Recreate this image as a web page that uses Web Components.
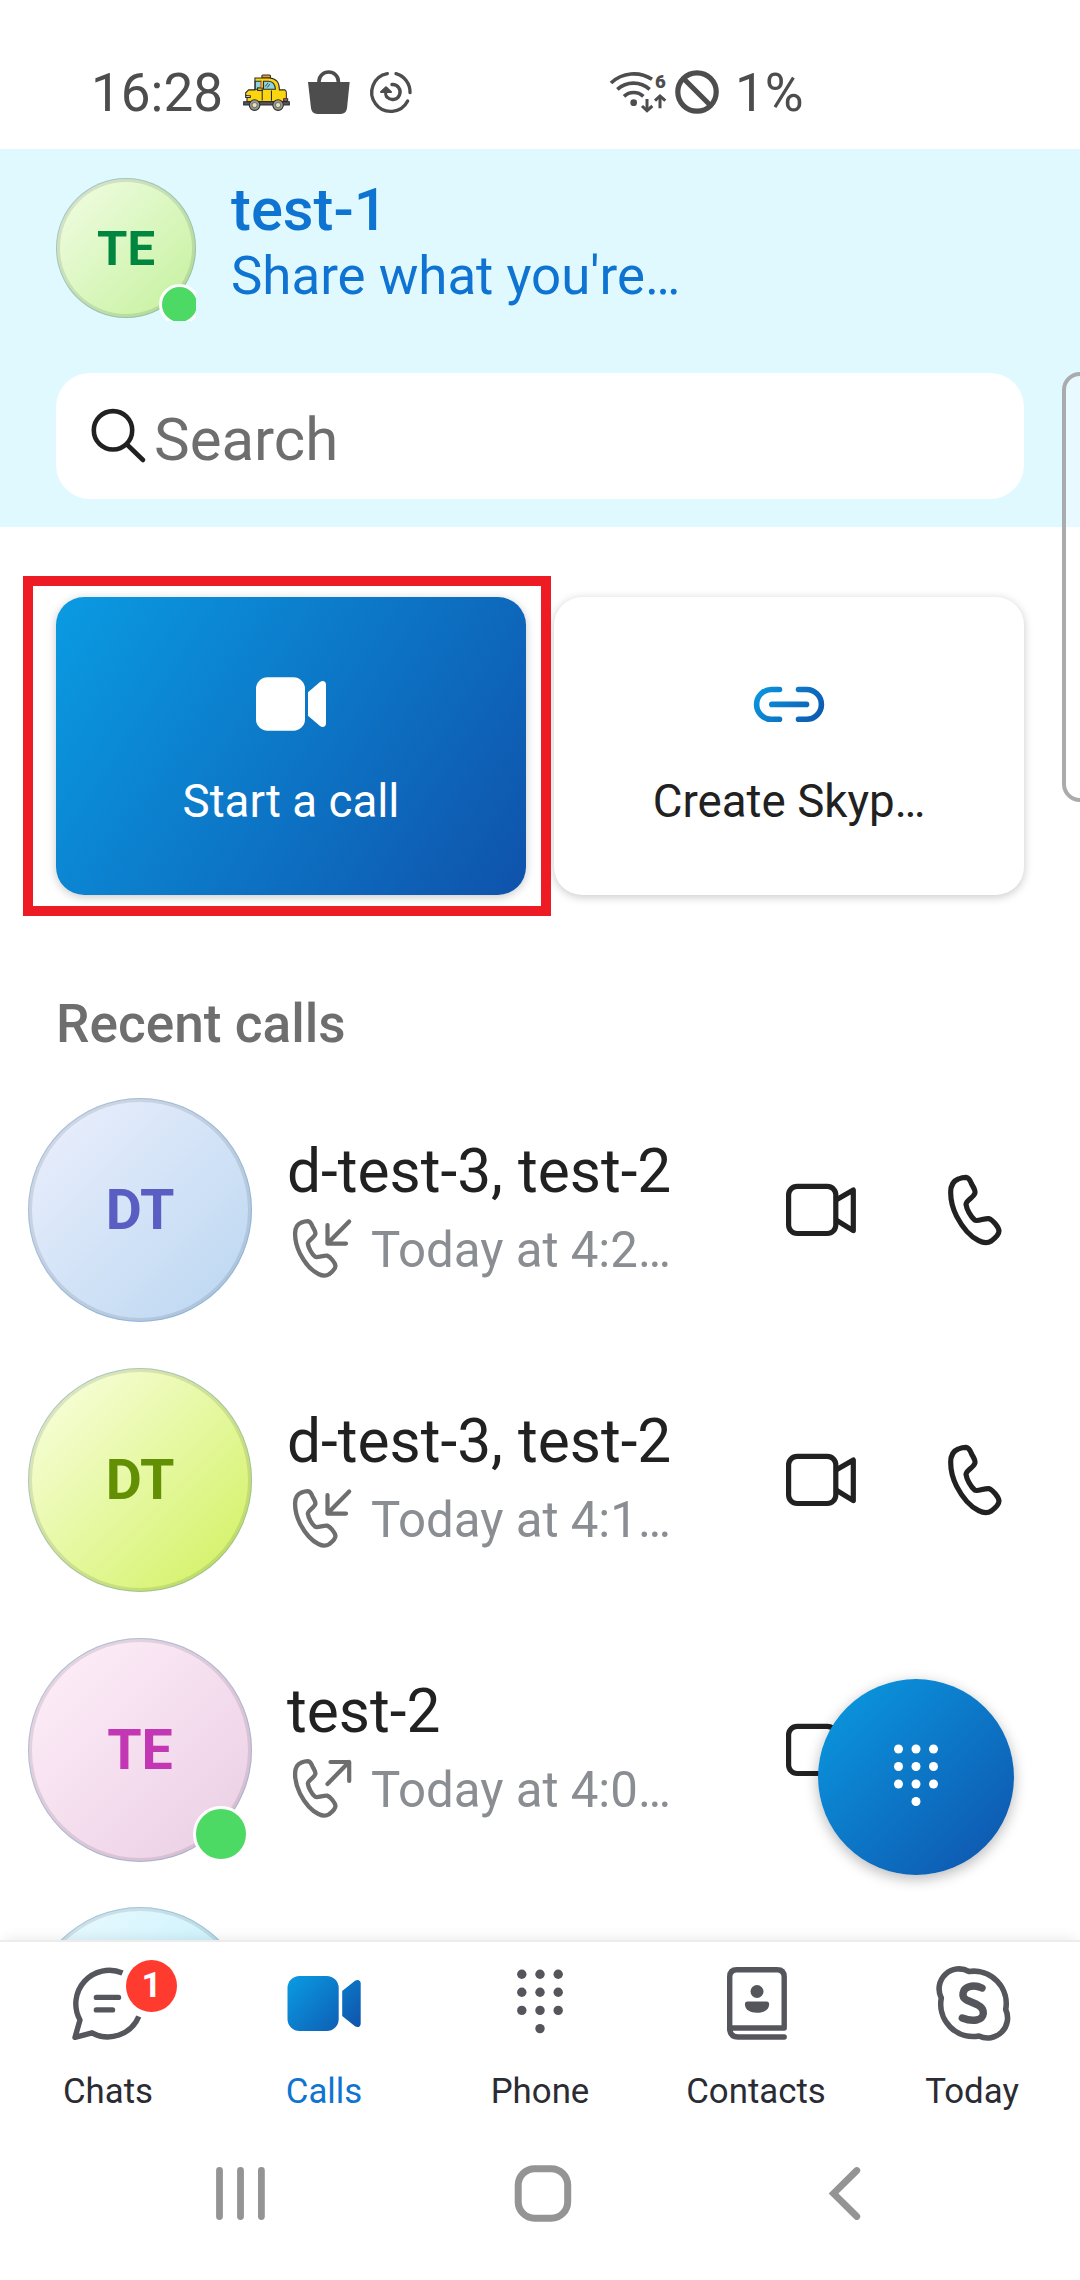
<!DOCTYPE html>
<html lang="en">
<head>
<meta charset="utf-8">
<title>Calls</title>
<style>
html,body{margin:0;padding:0;background:#fff}
body{width:1080px;height:2280px;overflow:hidden;font-family:Roboto,"Liberation Sans",sans-serif}
</style>
</head>
<body>
<phone-screen></phone-screen>
<script>
const HANDSET = 'M632 217C632 196 642 182 655 177C662 174 672 172 678 172C687 173 691 182 694 190C699 201 706 208 705 218C702 232 678 241 678 253C680 268 692 290 704 300C712 305 735 294 747 296C759 300 776 322 777 333C777 343 763 356 754 363C743 370 728 368 716 362C690 349 665 318 650 289C637 264 632 240 632 217Z';
const dots = (xs, ys, r) => ys.map((y, i) => xs.filter((_, j) => i < 3 || j === 1).map(x => `<circle cx="${x}" cy="${y}" r="${r}"/>`).join('')).join('');
const CALLBACK = `<g transform="translate(292 1218) scale(.2785) translate(-621 -161)"><path d="${HANDSET}" stroke-width="15.5"/></g>`;

// name: [viewBox, markup]; one viewBox unit is one pixel unless a size is given
const ICONS = {
  taxi: ['540 95 152 124', '<g stroke="#2a2a30" stroke-width="3.2"><rect x="602" y="104" width="26" height="9" rx="3" fill="#f59a23"/><path d="M581 113H625C645 114 655 126 655 149H672Q676 151 676 158V184H557V166H553V158L562 149H581Z" fill="#fbd60f"/><path d="M582 123H600V147H582Z" fill="#8fd3dc"/><path d="M607 123H622C636 124 642 132 643 147H607Z" fill="#8fd3dc"/><path d="M547 185H685V195H547Z" fill="#55555b"/><path d="M603 148V181M631 151V182" fill="none"/><path d="M553 167H567V172H553Z" fill="#fff"/><path d="M668 176H680V183H668Z" fill="#e8695c"/><rect x="589" y="143" width="14" height="8" fill="#e3b51c"/><path d="M601 123V143" stroke="#e98f1c" stroke-width="5"/><path d="M612 139L621 128M618 142L626 132" fill="none" stroke-width="2.5"/><circle cx="580" cy="195" r="16" fill="#9a9c8e"/><circle cx="651" cy="195" r="16" fill="#9a9c8e"/><circle cx="580" cy="195" r="8" fill="#e9e3bd" stroke="#77786d"/><circle cx="651" cy="195" r="8" fill="#e9e3bd" stroke="#77786d"/></g>', 51, 41],
  bag: ['741 87 132 138', '<path d="M744 126H869L861 205Q858 222 842 222H772Q756 222 753 205Z" fill="#4d4d4d"/><path d="M777 130V124A29 28 0 0 1 835 124V130" fill="none" stroke="#4d4d4d" stroke-width="11"/>', 44, 46],
  swirl: ['930 90 132 132', '<g fill="none" stroke="#4d4d4d" stroke-width="10" stroke-linecap="round"><path d="M982 101A57 57 0 1 0 1043 183"/><path d="M1008 101A57 57 0 0 1 1050 158"/><path d="M996 133.500A22.500 22.500 0 1 1 981 171"/><path d="M980 171Q975 164 978 152" stroke-width="9"/></g><path d="M963 156L978 142L993 156Z" fill="#4d4d4d" stroke="#4d4d4d" stroke-width="6" stroke-linejoin="round"/>', 44, 44],
  wifi: ['88 87 174 135', '<g fill="none" stroke="#4d4d4d" stroke-width="11"><path d="M94 126A99 99 0 0 1 217 115"/><path d="M113 145A72 72 0 0 1 210 145"/><path d="M133 166A42 42 0 0 1 191 166"/><path d="M202 174V208M241 202V168" stroke-width="9"/><path d="M187 195L202 209L218 195M226 179L241 165L257 179" stroke-width="9"/></g><circle cx="162" cy="185" r="10" fill="#4d4d4d"/><text x="226" y="140" font-family="Roboto" font-weight="900" font-size="56" fill="#4d4d4d">6</text>', 58, 45],
  block: ['0 0 44 44', '<g fill="none" stroke="#4d4d4d" stroke-width="5.200"><circle cx="22" cy="22" r="19.200"/><path d="M8.500 8.500L35.500 35.500"/></g>', 44, 44],
  search: ['88 405 60 60', '<g fill="none" stroke="#212121" stroke-width="4.600" stroke-linecap="round"><circle cx="113" cy="430.300" r="19.200"/><path d="M127 444.500L143 460"/></g>'],
  videoFill: ['255 668 72 72', '<g fill="#fff"><rect x="256" y="677.300" width="49" height="53.400" rx="11.500"/><path d="M308 692.200L320 682C322.500 680 326 681 326 684.500V723.500C326 727 322.500 728 320 726L308 715.800Z"/></g>'],
  link: ['753 668 72 72', '<defs><linearGradient id="g" gradientUnits="userSpaceOnUse" x1="757" y1="680" x2="822" y2="728"><stop offset="0" stop-color="#0a9be2"/><stop offset="1" stop-color="#0f52ab"/></linearGradient></defs><g fill="none" stroke="url(#g)" stroke-width="5.600" stroke-linecap="round"><path d="M779.500 689.500H771.500A14.900 14.900 0 0 0 771.500 719.300H779.500"/><path d="M798.500 689.500H806.500A14.900 14.900 0 0 1 806.500 719.300H798.500"/><path d="M771.800 704.400H806.500"/></g>'],
  video: ['785 1174 72 72', '<g fill="none" stroke="#212121" stroke-width="5.200" stroke-linejoin="round"><rect x="788.600" y="1186.300" width="47.200" height="47.200" rx="8.500"/><path d="M836 1200L853.300 1190V1230.600L836 1220"/></g>'],
  phone: ['597 162 216 216', `<path d="${HANDSET}" fill="none" stroke="#212121" stroke-width="15.500" stroke-linejoin="round"/>`, 72, 72],
  incoming: ['292 1218 62 62', `<g fill="none" stroke="#6e6e6e" stroke-width="4.200" stroke-linecap="round" stroke-linejoin="round">${CALLBACK}<path d="M349.200 1221.500L327.500 1243.500M327.500 1225V1243.600H346"/></g>`],
  outgoing: ['292 1218 62 62', `<g fill="none" stroke="#6e6e6e" stroke-width="4.200" stroke-linecap="round" stroke-linejoin="round">${CALLBACK}<path d="M327.500 1244L349 1222M330.500 1222H349.200V1241"/></g>`],
  keypadFab: ['876 1735 80 80', `<g fill="#fff">${dots([898.5, 916, 933.5], [1749, 1766.5, 1784, 1801.5], 4.5)}</g>`],
  chats: ['68 1963 80 80', '<g fill="none" stroke="#55565c" stroke-width="5.400" stroke-linejoin="round"><path d="M122.500 1973A33.500 33.500 0 0 0 80 2020L75 2037.400L92 2032.800A33.500 33.500 0 0 0 138.800 2016.500"/><path d="M96.400 1997.400H118.500M96.400 2009.900H112.500" stroke-linecap="round"/></g>'],
  calls: ['284 1963 80 80', '<defs><linearGradient id="g" gradientUnits="userSpaceOnUse" x1="290" y1="1975" x2="356" y2="2035"><stop offset="0" stop-color="#0a9be2"/><stop offset="1" stop-color="#0f52ab"/></linearGradient></defs><g fill="url(#g)"><rect x="287.500" y="1976" width="51.200" height="55" rx="12"/><path d="M342.200 1991L355 1980.700C357.500 1979 360.700 1980 360.700 1983.500V2023.500C360.700 2027 357.500 2028 355 2026.300L342.200 2016Z"/></g>'],
  keypad: ['500 1963 80 80', `<g fill="#55565c">${dots([521.8, 540, 558.2], [1974.3, 1992.3, 2010.4, 2028.6], 4.7)}</g>`],
  contacts: ['716 1963 80 80', '<g fill="none" stroke="#55565c" stroke-width="5.400" stroke-linecap="round"><path d="M784.200 2028H729.700V1977Q729.700 1969.800 737 1969.800H777Q784.200 1969.800 784.200 1977V2027.500M729.700 2028Q729.700 2037 738 2037H784.200"/></g><g fill="#55565c"><circle cx="757" cy="1991.500" r="6.500"/><path d="M747 2001.500H767Q769.200 2001.500 769.200 2004C769 2010 764 2012.700 757 2012.700S745 2010 744.900 2004Q744.900 2001.500 747 2001.500Z"/></g>'],
  skype: ['932 1963 80 80', '<g fill="none" stroke="#55565c" stroke-linejoin="round"><path stroke-width="5.600" d="M969 1971.500A32.500 32.500 0 0 1 1005.700 2009.500A20 20 0 0 1 979 2036A32.500 32.500 0 0 1 941.300 1998A20 20 0 0 1 969 1971.500Z"/><path stroke-width="7.400" stroke-linecap="round" d="M982 1988C978 1986 973 1985.500 969 1986.700C962 1989 961 1997 966.500 2000L977 2004.500C986 2009 985 2018.500 976.500 2020C971 2021 966 2019.500 962.300 2018"/></g>'],
  recents: ['210 2163 60 60', '<path d="M219.500 2170.500V2216.500M240.500 2170.500V2216.500M261.400 2170.500V2216.500" stroke="#949494" stroke-width="6.800" stroke-linecap="round"/>'],
  home: ['513 2163 60 60', '<rect x="518.200" y="2168.700" width="49.500" height="49.500" rx="16.500" fill="none" stroke="#949494" stroke-width="7"/>'],
  back: ['813 2163 60 60', '<path d="M856.800 2170.500L833.500 2193.500L856.800 2216.500" fill="none" stroke="#949494" stroke-width="6.800" stroke-linecap="round"/>']
};

function define(name, css, render) {
  customElements.define(name, class extends HTMLElement {
    constructor() { super(); this.attachShadow({mode: 'open'}); }
    connectedCallback() {
      this.shadowRoot.innerHTML = `<style>:host{box-sizing:border-box}*{box-sizing:border-box}${css}</style>${render(this)}`;
    }
  });
}
const attr = (el, n) => el.getAttribute(n) || '';

define('ui-icon', ':host{display:block;flex:none}svg{display:block;overflow:visible}', el => {
  const [vb, body, w, h] = ICONS[attr(el, 'name')];
  const [, , vw, vh] = vb.split(' ');
  return `<svg viewBox="${vb}" width="${w || vw}" height="${h || vh}" aria-hidden="true">${body}</svg>`;
});

define('user-avatar', `
  :host{display:block;flex:none;position:relative;width:var(--size,224px);height:var(--size,224px)}
  .disc{width:100%;height:100%;padding-top:var(--nudge,2px);border-radius:50%;background:linear-gradient(135deg,var(--from),var(--to));display:flex;align-items:center;justify-content:center;color:var(--ink);font-weight:700;font-size:var(--font,55.5px);line-height:1;box-shadow:inset 0 0 0 1px rgba(60,140,210,.3),inset 0 0 0 4px rgba(60,60,60,.13)}
  .clip{position:absolute;left:0;top:0;right:0;bottom:var(--drop,0px);overflow:hidden}
  .dot{position:absolute;right:var(--dr,3px);bottom:var(--db,0px);width:var(--ds,56px);height:var(--ds,56px);border-radius:50%;background:#4cd964;border:3px solid #fff}`,
  el => `<div class="disc"><slot></slot></div>${el.hasAttribute('online') ? '<div class="clip"><div class="dot"></div></div>' : ''}`);

define('status-bar', `
  :host{display:flex;height:149px;padding:0 0 0 91px;color:#4d4d4d;font-size:53px;line-height:62px}
  .row{display:flex;align-items:center;height:46px;margin-top:69px;flex:none}
  span{white-space:pre;margin-top:2px}
  .time{width:150px}.bag{margin-left:15px}.swirl{margin-left:19px}.wifi{margin-left:195px}.block{margin-left:8px}.pct{margin-left:16px}`,
  () => `<div class="row"><span class="time">16:28</span><ui-icon name="taxi"></ui-icon><ui-icon class="bag" name="bag"></ui-icon><ui-icon class="swirl" name="swirl"></ui-icon><ui-icon class="wifi" name="wifi"></ui-icon><ui-icon class="block" name="block"></ui-icon><span class="pct">1%</span></div>`);

define('profile-header', `
  :host{display:flex;flex-direction:column;height:378px;padding:29px 56px 28px;background:#e0f9ff}
  .me{display:flex;height:140px;margin-bottom:55px}
  user-avatar{--size:140px;--font:49px;--nudge:0px;--from:#f3fde6;--to:#c3f19b;--ink:#00863f;--drop:-3px;--dr:-4px;--db:-4px;--ds:41px}
  .who{margin:-1px 0 0 35px;color:#0f74d1;line-height:66px;white-space:nowrap}
  .name{font-size:59.700px;font-weight:500}.mood{font-size:52.800px}
  .search{display:flex;align-items:center;height:126px;border-radius:34px;background:#fff;padding-left:32px;color:#6e6e6e;font-size:60px;line-height:70px}
  .search ui-icon{margin:-2px 6px 0 0}.search span{margin-top:8px}`,
  () => `<div class="me"><user-avatar online>TE</user-avatar><div class="who"><div class="name">test-1</div><div class="mood">Share what you're…</div></div></div>
  <div class="search"><ui-icon name="search"></ui-icon><span>Search</span></div>`);

define('action-card', `
  :host{display:flex;flex-direction:column;align-items:center;width:470px;height:298px;padding-top:71px;border-radius:28px;background:#fff;color:#212121;font-size:45.700px;line-height:56px;white-space:nowrap;box-shadow:0 2px 10px rgba(0,0,0,.22)}
  :host([primary]){background:linear-gradient(123deg,#0a9be2,#0f52ab);color:#fff}
  div{margin-top:34px}`,
  el => `<ui-icon name="${attr(el, 'icon')}"></ui-icon><div><slot></slot></div>`);

define('call-row', `
  :host{display:flex;height:270px;padding:0 69px 0 28px}
  .text{flex:1;min-width:0;margin:39px 0 0 35px;white-space:nowrap}
  .name{font-size:60.400px;line-height:70px;color:#212121;margin-bottom:7px}
  .sub{display:flex;align-items:center;margin-left:5px;height:70px;gap:17px;font-size:49.200px;line-height:70px;color:#8a8d91}
  .sub span{margin-top:1px}
  .acts{display:flex;gap:82px;height:224px;align-items:center}`,
  el => `<user-avatar ${el.hasAttribute('online') ? 'online' : ''}>${attr(el, 'initials')}</user-avatar>${el.hasAttribute('name') ? `<div class="text"><div class="name">${attr(el, 'name')}</div><div class="sub"><ui-icon name="${attr(el, 'kind')}"></ui-icon><span>${attr(el, 'when')}</span></div></div><div class="acts"><ui-icon name="video"></ui-icon><ui-icon name="phone"></ui-icon></div>` : ''}`);

define('tab-item', `
  :host{display:flex;flex-direction:column;align-items:center;flex:1;position:relative;padding-top:21px;font-size:34.800px;line-height:44px;color:#2b2b33}
  :host([active]){color:#0f74d1}
  .label{margin-top:26px}
  .badge{position:absolute;left:126px;top:18px;width:51px;height:52px;border-radius:50%;background:#ff3b30;color:#fff;font-weight:700;font-size:35px;line-height:51px;text-align:center}`,
  el => `<ui-icon name="${attr(el, 'icon')}"></ui-icon>${el.hasAttribute('badge') ? `<div class="badge">${attr(el, 'badge')}</div>` : ''}<div class="label"><slot></slot></div>`);

define('tab-bar', ':host{display:flex;height:166px;border-top:2px solid #ececec;background:#fff;box-shadow:0 -8px 10px -4px rgba(0,0,0,.06);position:relative}',
  () => '<tab-item icon="chats" badge="1">Chats</tab-item><tab-item icon="calls" active>Calls</tab-item><tab-item icon="keypad">Phone</tab-item><tab-item icon="contacts">Contacts</tab-item><tab-item icon="skype">Today</tab-item>');

define('system-nav', ':host{display:flex;align-items:center;height:174px;padding-left:210px;gap:243px}ui-icon:last-child{margin-left:-3px}',
  () => '<ui-icon name="recents"></ui-icon><ui-icon name="home"></ui-icon><ui-icon name="back"></ui-icon>');

define('phone-screen', `
  :host{display:flex;flex-direction:column;position:relative;width:1080px;height:2280px;overflow:hidden;background:#fff}
  main{height:1413px;overflow:hidden}
  .cards{display:flex;gap:28px;padding:70px 56px 0}
  h2{margin:99px 0 44px 56px;font-size:53.200px;line-height:60px;font-weight:500;color:#6e6e6e}
  .a{--from:#edf0fd;--to:#b9d6f1;--ink:#5a5dc2}
  .b{--from:#fbffe6;--to:#d0f15c;--ink:#628f04}
  .c{--from:#fff0fa;--to:#eacde3;--ink:#c437b4}
  .c+.d{margin-top:-1px}
  .d{--from:#eefaff;--to:#b0ecfa;--ink:#0078a0}
  .fab{position:absolute;left:818px;top:1679px;width:196px;height:196px;border-radius:50%;background:linear-gradient(135deg,#0a9be2,#0f52ab);box-shadow:0 4px 14px rgba(0,0,0,.28);padding:56px 58px}
  .edge{position:absolute;left:1062px;top:372px;width:40px;height:430px;border:4px solid #a9abac;border-radius:18px;background:rgba(255,255,255,.25)}
  .mark{position:absolute;left:23px;top:576px;width:528px;height:340px;border:10px solid #ed1c24}`,
  () => `<status-bar></status-bar><profile-header></profile-header>
  <main><div class="cards"><action-card primary icon="videoFill">Start a call</action-card><action-card icon="link">Create Skyp…</action-card></div>
  <h2>Recent calls</h2>
  <call-row class="a" initials="DT" name="d-test-3, test-2" kind="incoming" when="Today at 4:2…"></call-row>
  <call-row class="b" initials="DT" name="d-test-3, test-2" kind="incoming" when="Today at 4:1…"></call-row>
  <call-row class="c" initials="TE" name="test-2" kind="outgoing" when="Today at 4:0…" online></call-row>
  <call-row class="d"></call-row></main>
  <tab-bar></tab-bar><system-nav></system-nav>
  <div class="fab"><ui-icon name="keypadFab"></ui-icon></div><div class="edge"></div><div class="mark"></div>`);
</script>
</body>
</html>
